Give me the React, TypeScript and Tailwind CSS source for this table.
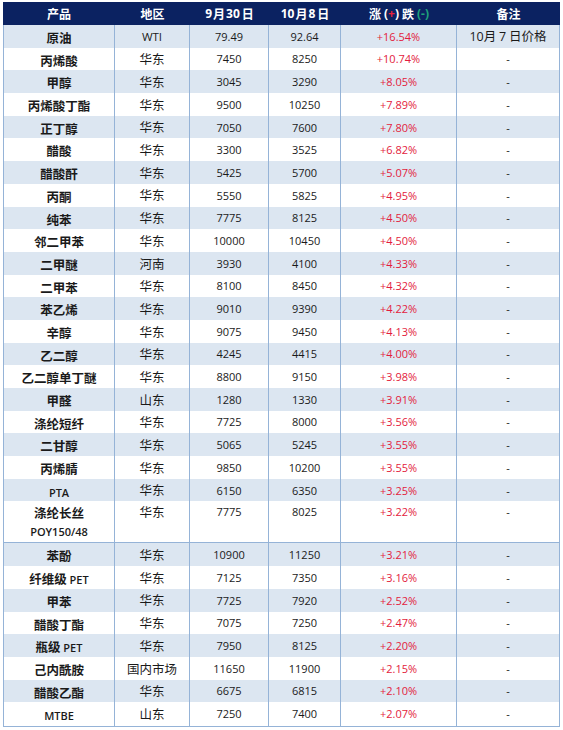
const cjk = "font-['Noto_Sans_CJK_SC',sans-serif]";
const latin = "font-['Open_Sans','Noto_Sans_CJK_SC',sans-serif]";

type Row = {
  name: string;
  sub?: string;
  region: string;
  before: string;
  after: string;
  change: string;
  note?: string;
};

const rows: Row[] = [
  { name: "原油", region: "WTI", before: "79.49", after: "92.64", change: "+16.54%", note: "10月 7 日价格" },
  { name: "丙烯酸", region: "华东", before: "7450", after: "8250", change: "+10.74%" },
  { name: "甲醇", region: "华东", before: "3045", after: "3290", change: "+8.05%" },
  { name: "丙烯酸丁酯", region: "华东", before: "9500", after: "10250", change: "+7.89%" },
  { name: "正丁醇", region: "华东", before: "7050", after: "7600", change: "+7.80%" },
  { name: "醋酸", region: "华东", before: "3300", after: "3525", change: "+6.82%" },
  { name: "醋酸酐", region: "华东", before: "5425", after: "5700", change: "+5.07%" },
  { name: "丙酮", region: "华东", before: "5550", after: "5825", change: "+4.95%" },
  { name: "纯苯", region: "华东", before: "7775", after: "8125", change: "+4.50%" },
  { name: "邻二甲苯", region: "华东", before: "10000", after: "10450", change: "+4.50%" },
  { name: "二甲醚", region: "河南", before: "3930", after: "4100", change: "+4.33%" },
  { name: "二甲苯", region: "华东", before: "8100", after: "8450", change: "+4.32%" },
  { name: "苯乙烯", region: "华东", before: "9010", after: "9390", change: "+4.22%" },
  { name: "辛醇", region: "华东", before: "9075", after: "9450", change: "+4.13%" },
  { name: "乙二醇", region: "华东", before: "4245", after: "4415", change: "+4.00%" },
  { name: "乙二醇单丁醚", region: "华东", before: "8800", after: "9150", change: "+3.98%" },
  { name: "甲醛", region: "山东", before: "1280", after: "1330", change: "+3.91%" },
  { name: "涤纶短纤", region: "华东", before: "7725", after: "8000", change: "+3.56%" },
  { name: "二甘醇", region: "华东", before: "5065", after: "5245", change: "+3.55%" },
  { name: "丙烯腈", region: "华东", before: "9850", after: "10200", change: "+3.55%" },
  { name: "PTA", region: "华东", before: "6150", after: "6350", change: "+3.25%" },
  { name: "涤纶长丝", sub: "POY150/48", region: "华东", before: "7775", after: "8025", change: "+3.22%" },
  { name: "苯酚", region: "华东", before: "10900", after: "11250", change: "+3.21%" },
  { name: "纤维级 PET", region: "华东", before: "7125", after: "7350", change: "+3.16%" },
  { name: "甲苯", region: "华东", before: "7725", after: "7920", change: "+2.52%" },
  { name: "醋酸丁酯", region: "华东", before: "7075", after: "7250", change: "+2.47%" },
  { name: "瓶级 PET", region: "华东", before: "7950", after: "8125", change: "+2.20%" },
  { name: "己内酰胺", region: "国内市场", before: "11650", after: "11900", change: "+2.15%" },
  { name: "醋酸乙酯", region: "华东", before: "6675", after: "6815", change: "+2.10%" },
  { name: "MTBE", region: "山东", before: "7250", after: "7400", change: "+2.07%" },
];

const cols = "grid grid-cols-[112px_75px_79px_72px_116px_103px]";

// splits a name into CJK and latin runs so PET / PTA get the latin face
function Name({ text }: { text: string }) {
  const parts = text.split(/([A-Za-z0-9/]+)/).filter(Boolean);
  return (
    <span className="whitespace-pre">
      {parts.map((p, i) =>
        /^[A-Za-z0-9/]+$/.test(p) ? (
          <span key={i} className={`${latin} text-[11px] font-semibold`}>
            {p}
          </span>
        ) : (
          <span key={i} className={`${cjk} text-[12.5px] font-bold`}>
            {p}
          </span>
        ),
      )}
    </span>
  );
}

function Cell({
  children,
  first,
  tall,
  extra,
}: {
  children: React.ReactNode;
  first?: boolean;
  tall?: boolean;
  extra?: React.ReactNode;
}) {
  return (
    <div
      className={`flex flex-col items-center border-b border-r border-[#95b3d7] text-[#1a1a1a] ${
        first ? "border-l" : ""
      } ${tall ? "justify-start" : "justify-center"}`}
    >
      {tall ? (
        <>
          <div className="flex h-[22px] items-center">{children}</div>
          {extra}
        </>
      ) : (
        children
      )}
    </div>
  );
}

function HeaderCell({ children }: { children: React.ReactNode }) {
  return (
    <div
      className={`flex items-center justify-center ${cjk} text-[12px] font-bold text-white`}
    >
      {children}
    </div>
  );
}

export default function App() {
  return (
    <div className="min-h-[730px] w-[563px] bg-white pl-[3px] pt-[2px]">
      <div className="flex w-[557px] flex-col">
        <div className={`${cols} h-[23px] bg-[#0b2261]`}>
          <HeaderCell>产品</HeaderCell>
          <HeaderCell>地区</HeaderCell>
          <HeaderCell>
            <span className={latin}>9</span>
            <span className="mx-[1px]">月</span>
            <span className={latin}>30</span>
            <span className="ml-[2px]">日</span>
          </HeaderCell>
          <HeaderCell>
            <span className={latin}>10</span>
            <span className="mx-[1px]">月</span>
            <span className={latin}>8</span>
            <span className="ml-[2px]">日</span>
          </HeaderCell>
          <HeaderCell>
            涨<span className={`${latin} mx-[3px]`}>(<span className="text-[#e8203a]">+</span>)</span>跌
            <span className={`${latin} ml-[3px] text-[#1fa37a]`}>(-)</span>
          </HeaderCell>
          <HeaderCell>备注</HeaderCell>
        </div>

        {rows.map((r, i) => {
          const tall = !!r.sub;
          return (
            <div
              key={r.name}
              className={`${cols} ${tall ? "h-[42px]" : "h-[22.7px]"} ${
                i % 2 === 0 ? "bg-[#dce6f1]" : "bg-white"
              }`}
            >
              <Cell
                first
                tall={tall}
                extra={
                  r.sub && (
                    <div
                      className={`${latin} mt-[1px] text-[11px] leading-[16px] font-semibold`}
                    >
                      {r.sub}
                    </div>
                  )
                }
              >
                <Name text={r.name} />
              </Cell>
              <Cell tall={tall}>
                <span
                  className={
                    r.region === "WTI"
                      ? `${latin} text-[11.5px]`
                      : `${cjk} text-[12.5px]`
                  }
                >
                  {r.region}
                </span>
              </Cell>
              <Cell tall={tall}>
                <span className={`${latin} text-[11px]`}>{r.before}</span>
              </Cell>
              <Cell tall={tall}>
                <span className={`${latin} text-[11px]`}>{r.after}</span>
              </Cell>
              <Cell tall={tall}>
                <span className={`${latin} text-[11px] text-[#e31c3d]`}>
                  {r.change}
                </span>
              </Cell>
              <Cell tall={tall}>
                {r.note ? (
                  <span className={`${cjk} text-[12.5px]`}>
                    <span className={latin}>10</span>月 <span className={latin}>7</span> 日价格
                  </span>
                ) : (
                  <span className={`${latin} text-[11px]`}>-</span>
                )}
              </Cell>
            </div>
          );
        })}
      </div>
    </div>
  );
}
